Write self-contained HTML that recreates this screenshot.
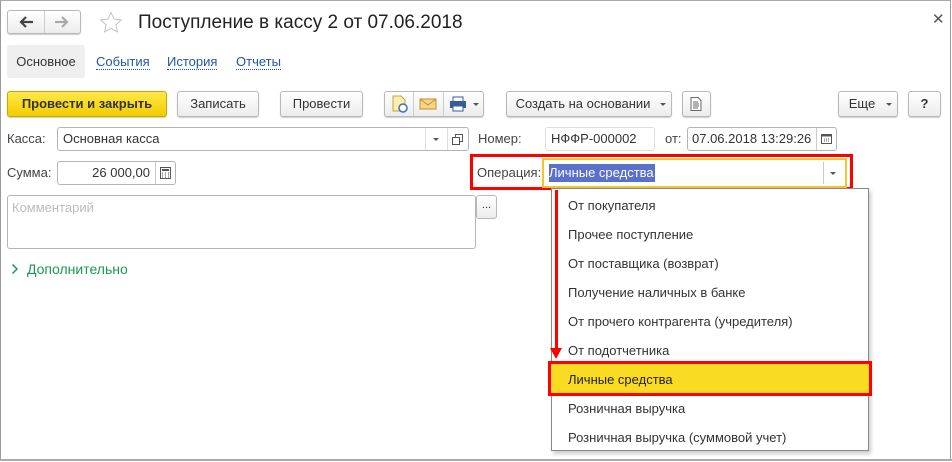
<!DOCTYPE html>
<html><head><meta charset="utf-8"><style>
*{box-sizing:border-box;margin:0;padding:0}
body{width:952px;height:462px;background:#fff;font-family:"Liberation Sans",Arial,sans-serif;font-size:13px;color:#333;position:relative;overflow:hidden}
.a{position:absolute}
.btn{position:absolute;height:26px;border:1px solid #b8b8b8;border-radius:3px;background:linear-gradient(#fff,#ececec);box-shadow:0 1px 1px rgba(0,0,0,.2);text-align:center;line-height:24px;font-size:13px;color:#333}
.fld{position:absolute;height:24px;border:1px solid #b5b5b5;border-radius:3px;background:#fff;line-height:22px;padding-left:5px;font-size:13px;color:#333}
.lbl{position:absolute;font-size:13px;color:#444}
.lnk{position:absolute;font-size:13px;color:#1f55a8;border-bottom:1px dotted #1f55a8;line-height:14px}
.it{position:absolute;left:568px;font-size:13px;color:#333}
.dd{position:absolute;width:0;height:0;border-left:3px solid transparent;border-right:3px solid transparent;border-top:3px solid #555}
</style></head><body>
<div class="a" style="left:0;top:0;width:951px;height:461px;border:1px solid #9a9a9a;border-top-color:#aaa"></div>
<!-- nav -->
<div class="btn" style="left:7px;top:10px;width:74px;height:24px"></div>
<div class="a" style="left:44px;top:11px;width:1px;height:22px;background:#ccc"></div>
<svg class="a" style="left:18px;top:15px" width="16" height="14"><path d="M15 7H3M8 2L3 7l5 5" fill="none" stroke="#444" stroke-width="2.2"/></svg>
<svg class="a" style="left:54px;top:15px" width="16" height="14"><path d="M1 7h12M8 2l5 5-5 5" fill="none" stroke="#aaa" stroke-width="2.2"/></svg>
<svg class="a" style="left:99px;top:11px" width="24" height="24" viewBox="0 0 24 24"><path d="M12 1.5l3.1 6.6 7.2.8-5.4 4.9 1.5 7.1L12 17.3l-6.4 3.6 1.5-7.1L1.7 8.9l7.2-.8z" fill="none" stroke="#c4c4c4" stroke-width="1"/></svg>
<div class="a" style="left:138px;top:11px;font-size:19px;color:#222;line-height:24px">Поступление в кассу 2 от 07.06.2018</div>
<div class="a" style="left:932px;top:10px;font-size:15px;color:#555">✕</div>
<!-- tabs -->
<div class="a" style="left:7px;top:45px;width:78px;height:33px;background:#efefef;border-radius:3px;line-height:33px;text-align:center;color:#333">Основное</div>
<div class="lnk" style="left:96px;top:55px">События</div>
<div class="lnk" style="left:167px;top:55px">История</div>
<div class="lnk" style="left:236px;top:55px">Отчеты</div>
<!-- toolbar -->
<div class="btn" style="left:7px;top:91px;width:160px;background:linear-gradient(#ffe94a,#f2cc00);border-color:#c9a800;font-weight:bold;color:#333">Провести и закрыть</div>
<div class="btn" style="left:177px;top:91px;width:82px">Записать</div>
<div class="btn" style="left:280px;top:91px;width:83px">Провести</div>
<div class="btn" style="left:384px;top:91px;width:100px"></div>
<div class="a" style="left:413px;top:92px;width:1px;height:24px;background:#ccc"></div>
<div class="a" style="left:443px;top:92px;width:1px;height:24px;background:#ccc"></div>
<svg class="a" style="left:390px;top:95px" width="20" height="18"><path d="M3 1h8l4 4v11H3z" fill="#fbeeb0" stroke="#c9a23a"/><circle cx="13" cy="13" r="4" fill="#fff" stroke="#3a6fc0" stroke-width="1.5"/></svg>
<svg class="a" style="left:419px;top:97px" width="18" height="14"><rect x="1" y="2" width="16" height="10" fill="#f6d488" stroke="#c68d2a"/><path d="M1 2l8 6 8-6" fill="none" stroke="#c68d2a"/></svg>
<svg class="a" style="left:449px;top:96px" width="18" height="16"><rect x="4" y="1" width="10" height="5" fill="#fff" stroke="#345d9a"/><rect x="1" y="5" width="16" height="7" fill="#345d9a"/><rect x="4" y="10" width="10" height="5" fill="#fff" stroke="#345d9a"/></svg>
<div class="dd" style="left:473px;top:103px"></div>
<div class="btn" style="left:506px;top:91px;width:166px;padding-right:12px">Создать на основании</div>
<div class="dd" style="left:660px;top:103px"></div>
<div class="btn" style="left:682px;top:91px;width:29px"></div>
<svg class="a" style="left:690px;top:97px" width="12" height="14"><path d="M1 .5h7l3 3v10H1z" fill="#fff" stroke="#666"/><path d="M3 5h5M3 7h6M3 9h6M3 11h5" stroke="#666"/></svg>
<div class="btn" style="left:838px;top:91px;width:60px;padding-right:12px">Еще</div>
<div class="dd" style="left:886px;top:103px"></div>
<div class="btn" style="left:908px;top:91px;width:33px;font-weight:bold">?</div>
<!-- fields -->
<div class="lbl" style="left:7px;top:131px">Касса:</div>
<div class="fld" style="left:57px;top:127px;width:412px">Основная касса</div>
<div class="a" style="left:425px;top:128px;width:1px;height:22px;background:#ddd"></div>
<div class="a" style="left:447px;top:128px;width:1px;height:22px;background:#ddd"></div>
<div class="dd" style="left:433px;top:138px"></div>
<svg class="a" style="left:452px;top:134px" width="11" height="11"><rect x="3.5" y=".5" width="7" height="7" fill="none" stroke="#555"/><rect x=".5" y="3.5" width="7" height="7" fill="#fff" stroke="#555"/></svg>
<div class="lbl" style="left:478px;top:131px">Номер:</div>
<div class="fld" style="left:545px;top:127px;width:110px;border-color:#ddd">НФФР-000002</div>
<div class="lbl" style="left:665px;top:131px">от:</div>
<div class="fld" style="left:687px;top:127px;width:150px;padding-left:4px">07.06.2018 13:29:26</div>
<div class="a" style="left:816px;top:128px;width:1px;height:22px;background:#ccc"></div>
<svg class="a" style="left:821px;top:133px" width="11" height="11"><rect x=".5" y="1.5" width="10" height="9" fill="none" stroke="#555"/><rect x=".5" y="1.5" width="10" height="2" fill="#555"/><path d="M3 6h1M5 6h1M7 6h1M3 8h1M5 8h1M7 8h1" stroke="#555"/></svg>
<div class="lbl" style="left:7px;top:165px">Сумма:</div>
<div class="fld" style="left:57px;top:161px;width:119px;text-align:right;padding-right:25px">26 000,00</div>
<div class="a" style="left:155px;top:162px;width:1px;height:22px;background:#ccc"></div>
<svg class="a" style="left:160px;top:167px" width="11" height="12"><rect x=".5" y=".5" width="10" height="11" fill="none" stroke="#555"/><rect x="2" y="2" width="7" height="2" fill="#555"/><path d="M2 6h1M5 6h1M8 6h1M2 8h1M5 8h1M8 8h1M2 10h1M5 10h1M8 10h1" stroke="#555"/></svg>
<!-- operation -->
<div class="a" style="left:470px;top:154px;width:383px;height:36px;border:3px solid #f00"></div>
<div class="lbl" style="left:477px;top:165px">Операция:</div>
<div class="a" style="left:542px;top:158px;width:305px;height:30px;border:2px solid #f4c430;background:#fff"></div>
<div class="a" style="left:549px;top:164px;height:18px;width:106px;background:#5b6fcc;color:#fff;line-height:18px;font-size:13px">Личные средства</div>
<div class="a" style="left:823px;top:162px;width:1px;height:22px;background:#ccc"></div>
<div class="dd" style="left:830px;top:172px"></div>
<!-- comment -->
<div class="fld" style="left:7px;top:195px;width:469px;height:54px;line-height:24px;color:#bbb;padding-left:4px">Комментарий</div>
<div class="btn" style="left:476px;top:195px;width:21px;height:24px;line-height:18px;font-size:11px;box-shadow:none">...</div>
<svg class="a" style="left:11px;top:263px" width="8" height="12"><path d="M1.5 1.5l4.5 4.5-4.5 4.5" fill="none" stroke="#1a9a52" stroke-width="1.5"/></svg>
<div class="a" style="left:27px;top:261px;font-size:14px;color:#1a9a52">Дополнительно</div>
<!-- bottom line -->
<div class="a" style="left:0;top:459px;width:952px;height:2px;background:#aaa"></div>
<!-- dropdown -->
<div class="a" style="left:551px;top:188px;width:318px;height:263px;border:1px solid #888;background:#fff;box-shadow:2px 3px 4px rgba(0,0,0,.2)"></div>
<div class="it" style="top:198px">От покупателя</div>
<div class="it" style="top:227px">Прочее поступление</div>
<div class="it" style="top:256px">От поставщика (возврат)</div>
<div class="it" style="top:285px">Получение наличных в банке</div>
<div class="it" style="top:314px">От прочего контрагента (учредителя)</div>
<div class="it" style="top:343px">От подотчетника</div>
<div class="a" style="left:548px;top:361px;width:324px;height:35px;border:3px solid #f00;background:#fadb24"></div>
<div class="it" style="top:372px;color:#222">Личные средства</div>
<div class="it" style="top:401px">Розничная выручка</div>
<div class="it" style="top:430px">Розничная выручка (суммовой учет)</div>
<div class="a" style="left:555px;top:190px;width:3px;height:160px;background:#f00"></div>
<div class="a" style="left:550px;top:348px;width:0;height:0;border-left:6.5px solid transparent;border-right:6.5px solid transparent;border-top:11px solid #f00"></div>
</body></html>
